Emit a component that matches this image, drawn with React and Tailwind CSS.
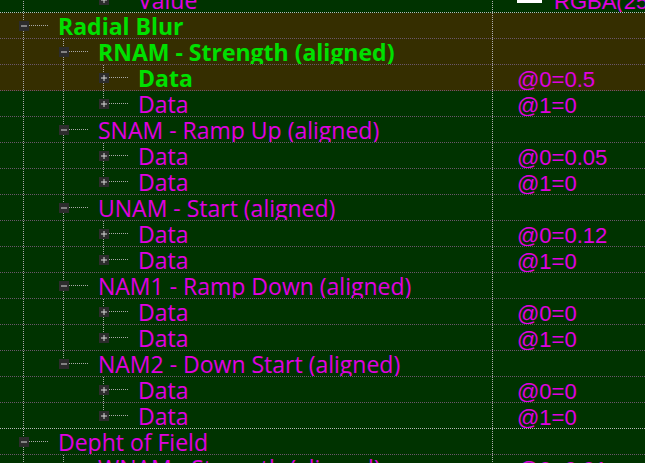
import React from 'react'

const GREEN = 'text-[#00e000]'
const PINK = 'text-[#e000e0]'

// one 40px column of the tree guide
function Guide({ kind }) {
  if (kind === 'none') return <div className="w-[40px] shrink-0" />
  const icon = kind.startsWith('plus') || kind.startsWith('minus')
  const last = kind.endsWith('last')
  return (
    <svg width="40" height="26" className="shrink-0" style={{ overflow: 'visible' }}>
      <line
        x1="23.5" y1="0" x2="23.5" y2={icon && last ? 12 : 26}
        stroke="#a8a8a8" strokeDasharray="1 1"
      />
      {icon && (
        <>
          <line x1="29" y1="12.5" x2="48" y2="12.5" stroke="#a8a8a8" strokeDasharray="1 1" />
          <rect x="19" y="8" width="10" height="10" fill="#2c2c2c" />
          <line x1="21" y1="13" x2="27" y2="13" stroke="#d8d8d8" />
          {kind.startsWith('plus') && <line x1="24" y1="10" x2="24" y2="16" stroke="#d8d8d8" />}
        </>
      )}
    </svg>
  )
}

function Row({ guides, label, value, bold, green, olive, light, swatch }) {
  return (
    <div
      className={`flex h-[26px] overflow-hidden border-b border-dotted ${
        light ? 'border-[#b8b8b8]' : 'border-[#6a566a]'
      } ${olive ? 'bg-[#352e00]' : 'bg-[#003300]'}`}
    >
      <div className="flex w-[492px] shrink-0 items-start">
        {guides.map((g, i) => (
          <Guide key={i} kind={g} />
        ))}
        <span
          className={`ml-[18px] whitespace-nowrap font-['Open_Sans',sans-serif] text-[23px] leading-[26px] ${
            bold ? 'font-bold' : ''
          } ${green ? GREEN : PINK}`}
        >
          {label}
        </span>
      </div>
      <div className="flex flex-1 items-start border-l border-dotted border-[#b0b0b0] pl-[24px]">
        {swatch && <div className="mr-[12px] mt-[13px] h-[3px] w-[25px] shrink-0 bg-white" />}
        <span className={`mt-[2px] whitespace-nowrap font-['Liberation_Sans',Arial,sans-serif] text-[22px] leading-[26px] ${PINK}`}>
          {value}
        </span>
      </div>
    </div>
  )
}

const groups = [
  ['RNAM - Strength (aligned)', '@0=0.5', '@1=0'],
  ['SNAM - Ramp Up (aligned)', '@0=0.05', '@1=0'],
  ['UNAM - Start (aligned)', '@0=0.12', '@1=0'],
  ['NAM1 - Ramp Down (aligned)', '@0=0', '@1=0'],
  ['NAM2 - Down Start (aligned)', '@0=0', '@1=0'],
]

export default function App() {
  const rows = [
    { guides: ['line', 'none', 'plus-last'], label: 'Value', value: 'RGBA(255,255,255,255)', swatch: true, light: true },
    { guides: ['minus-mid'], label: 'Radial Blur', bold: true, green: true, olive: true },
  ]
  groups.forEach(([name, v0, v1], gi) => {
    const lastGroup = gi === groups.length - 1
    const sel = gi === 0
    rows.push({ guides: ['line', lastGroup ? 'minus-last' : 'minus-mid'], label: name, bold: sel, green: sel, olive: sel })
    rows.push({ guides: ['line', lastGroup ? 'none' : 'line', 'plus-mid'], label: 'Data', value: v0, bold: sel, green: sel, olive: sel })
    rows.push({ guides: ['line', lastGroup ? 'none' : 'line', 'plus-last'], label: 'Data', value: v1, light: lastGroup })
  })
  rows.push({ guides: ['minus-mid'], label: 'Depht of Field' })
  rows.push({ guides: ['line', 'minus-mid'], label: 'WNAM - Strength (aligned)', value: '@0=0.01' })

  return (
    <div className="h-[463px] w-[645px] overflow-hidden bg-[#003300]">
      <div className="mt-[-13px]">
        {rows.map((r, i) => (
          <Row key={i} {...r} />
        ))}
      </div>
    </div>
  )
}
